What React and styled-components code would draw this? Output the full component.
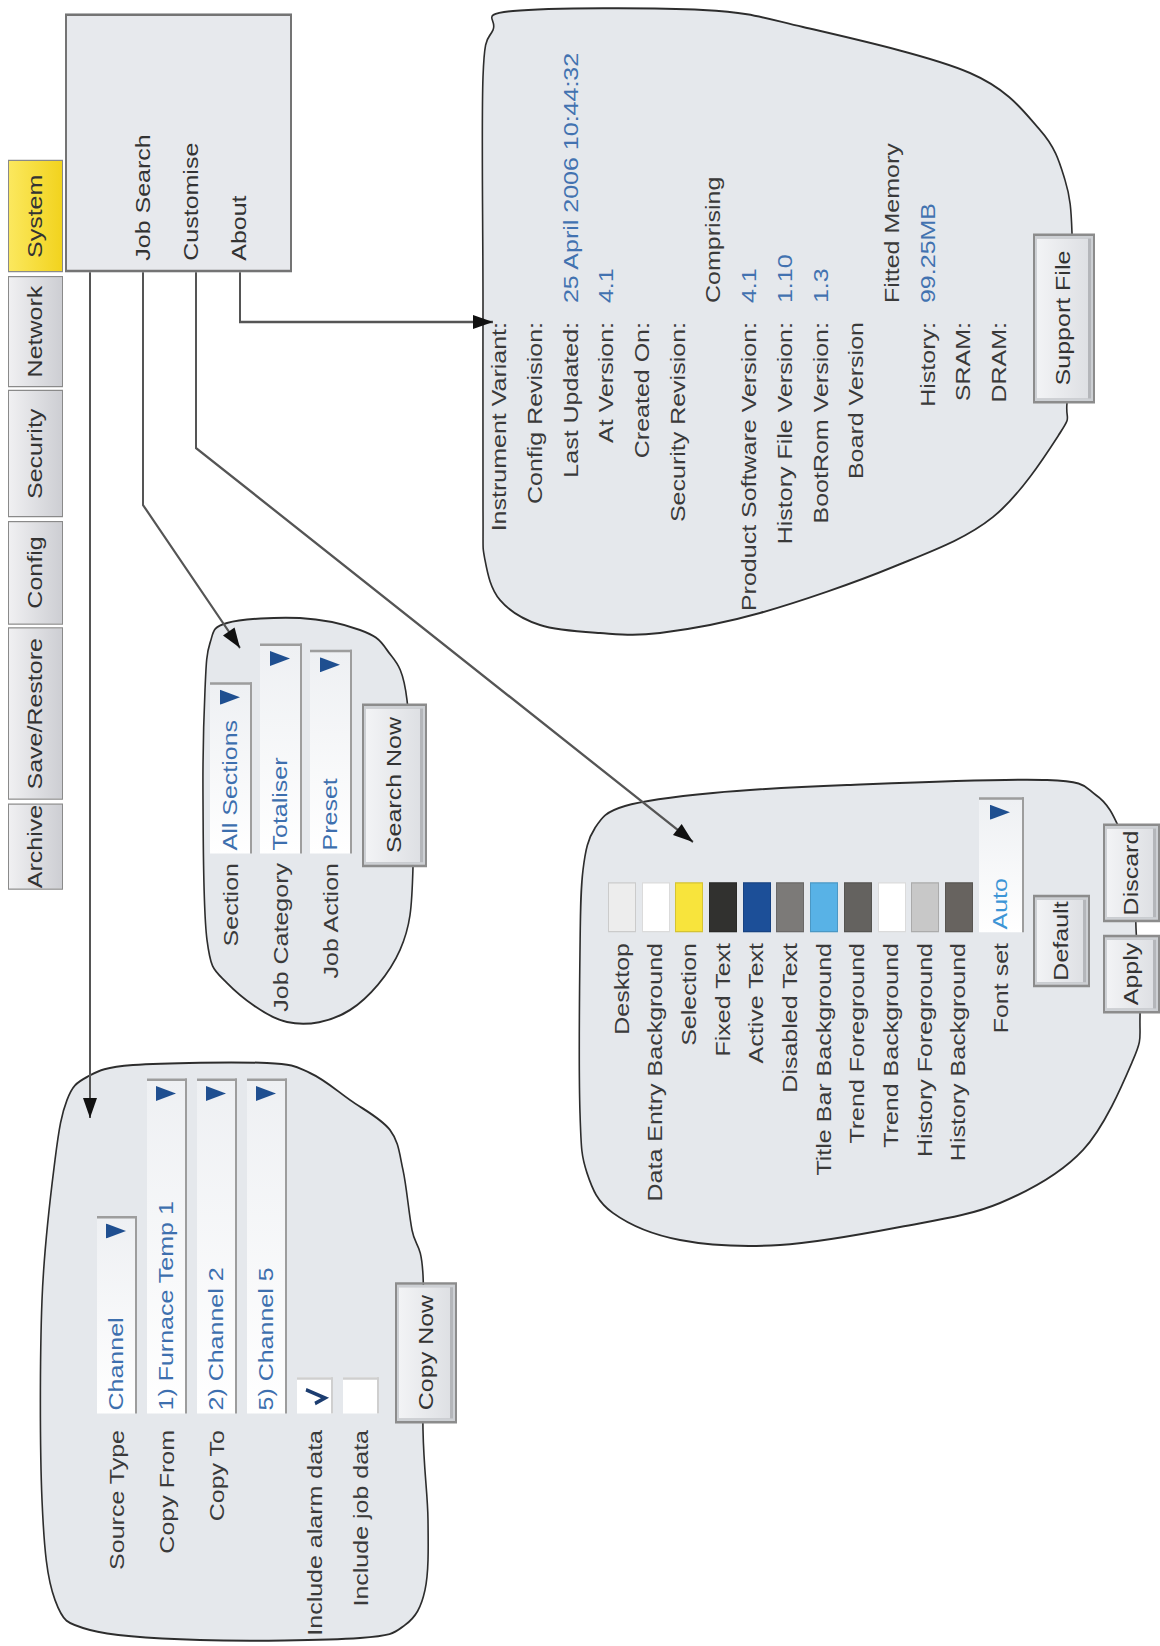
import React from 'react';
import styled, { createGlobalStyle } from 'styled-components';

// the screenshot is a landscape page turned on its side and stretched along the text direction
const SX = 1.25;
const W = 1646 / SX;
const H = 1160;

// points measured on the screenshot (x across, y down) -> canvas coords
const toCanvas = ([x, y]) => [(1646 - y) / SX, x];
const pts = (list) => list.map(toCanvas).map((p) => p.join(',')).join(' ');

const smoothPath = (raw) => {
  const p = raw.map(toCanvas);
  const n = p.length;
  let d = `M${p[0][0]},${p[0][1]}`;
  for (let i = 0; i < n; i++) {
    const p0 = p[(i - 1 + n) % n];
    const p1 = p[i];
    const p2 = p[(i + 1) % n];
    const p3 = p[(i + 2) % n];
    const c1 = [p1[0] + (p2[0] - p0[0]) / 6, p1[1] + (p2[1] - p0[1]) / 6];
    const c2 = [p2[0] - (p3[0] - p1[0]) / 6, p2[1] - (p3[1] - p1[1]) / 6];
    d += ` C${c1[0]},${c1[1]} ${c2[0]},${c2[1]} ${p2[0]},${p2[1]}`;
  }
  return d + 'Z';
};

const arrowHead = (a, b, len = 20, half = 7) => {
  const dx = b[0] - a[0];
  const dy = b[1] - a[1];
  const l = Math.hypot(dx, dy);
  const ux = dx / l;
  const uy = dy / l;
  const bx = b[0] - ux * len;
  const by = b[1] - uy * len;
  return pts([b, [bx - uy * half, by + ux * half], [bx + uy * half, by - ux * half]]);
};

const blobs = [
  // copy
  [[55, 1160], [67, 1100], [87, 1077], [133, 1065], [267, 1063], [310, 1073], [350, 1100], [390, 1130], [403, 1170], [412, 1230], [423, 1275], [423, 1430], [428, 1520], [425, 1590], [405, 1625], [360, 1638], [200, 1640], [90, 1630], [55, 1600], [42, 1500], [42, 1300]],
  // job search
  [[210, 643], [227, 623], [300, 618], [360, 630], [387, 650], [407, 700], [413, 867], [400, 950], [350, 1010], [287, 1022], [227, 983], [207, 940], [203, 800], [205, 690]],
  // customise
  [[583, 870], [595, 828], [625, 806], [713, 793], [847, 785], [1047, 780], [1096, 795], [1120, 830], [1134, 880], [1136, 928], [1140, 1017], [1133, 1060], [1083, 1150], [1000, 1203], [900, 1227], [780, 1245], [680, 1240], [613, 1213], [587, 1173], [580, 1113], [580, 950]],
  // about
  [[483, 77], [493, 30], [513, 11], [703, 10], [803, 27], [970, 73], [1040, 130], [1065, 180], [1072, 233], [1070, 320], [1067, 403], [1060, 433], [993, 517], [893, 567], [760, 613], [660, 633], [600, 633], [540, 625], [500, 600], [485, 560], [483, 510], [483, 300]],
];

const connectors = [
  [[90, 272], [90, 1118]],
  [[143, 272], [143, 505], [240, 648]],
  [[196, 272], [196, 448], [693, 842]],
  [[240, 272], [240, 322], [493, 322]],
];

const tabs = [
  { label: 'Archive', w: 69.6 },
  { label: 'Save/Restore', w: 137.6 },
  { label: 'Config', w: 83.2 },
  { label: 'Security', w: 101.6 },
  { label: 'Network', w: 88.8 },
  { label: 'System', w: 90.4, active: true },
];

const swatches = [
  ['Desktop', '#ededed'],
  ['Data Entry Background', '#ffffff'],
  ['Selection', '#f8e43c'],
  ['Fixed Text', '#31312f'],
  ['Active Text', '#1c4f98'],
  ['Disabled Text', '#7c7a78'],
  ['Title Bar Background', '#58b2e6'],
  ['Trend Foreground', '#64625f'],
  ['Trend Background', '#ffffff'],
  ['History Foreground', '#c8c8c8'],
  ['History Background', '#67635f'],
];

const about = [
  ['Instrument Variant:', ''],
  ['Config Revision:', ''],
  ['Last Updated:', '25 April 2006 10:44:32', true],
  ['At Version:', '4.1', true],
  ['Created On:', ''],
  ['Security Revision:', ''],
  ['', 'Comprising'],
  ['Product Software Version:', '4.1', true],
  ['History File Version:', '1.10', true],
  ['BootRom Version:', '1.3', true],
  ['Board Version', ''],
  ['', 'Fitted Memory'],
  ['History:', '99.25MB', true],
  ['SRAM:', ''],
  ['DRAM:', ''],
];

const GlobalStyle = createGlobalStyle`
  html, body {
    margin: 0;
    padding: 0;
    background: #fff;
  }
  body {
    font-family: "Liberation Sans", Arial, sans-serif;
  }
`;

const Page = styled.div`
  position: relative;
  width: 1160px;
  height: 1646px;
  overflow: hidden;
  background: #fff;
`;

const Canvas = styled.div`
  position: absolute;
  top: 0;
  left: 0;
  width: ${W}px;
  height: ${H}px;
  transform-origin: 0 0;
  transform: translateY(1646px) rotate(-90deg) scaleX(${SX});
  font-family: "Liberation Sans", Arial, sans-serif;
  font-size: 20px;
  color: #3a3a3a;
`;

const Drawing = styled.svg`
  position: absolute;
  inset: 0;
  width: 100%;
  height: 100%;
`;

const Node = styled.div`
  position: absolute;
  left: ${(p) => p.$x}px;
  top: ${(p) => p.$y}px;
  display: flex;
  flex-direction: column;
  align-items: flex-start;
`;

const TabStrip = styled.div`
  display: flex;
  gap: 2.6px;
  height: 55px;
`;

const Tab = styled.div`
  width: ${(p) => p.$w}px;
  box-sizing: border-box;
  display: flex;
  align-items: center;
  justify-content: center;
  border: 1.5px solid #8a8a8a;
  background: ${(p) =>
    p.$active
      ? 'linear-gradient(#fbe85e, #f2d31e)'
      : 'linear-gradient(#f0f0f2, #cdced3)'};
  color: #333;
  font-size: 20px;
  white-space: nowrap;
`;

const MenuBox = styled.div`
  width: 207.2px;
  height: 227px;
  box-sizing: border-box;
  border: 2.5px solid #747474;
  background: #e7e9ed;
  padding: 52px 0 0 7px;
  display: flex;
  flex-direction: column;
`;

const MenuItem = styled.div`
  line-height: 48px;
  color: #333;
`;

const FormGrid = styled.div`
  display: grid;
  grid-template-columns: ${(p) => p.$label}px auto;
  grid-template-rows: ${(p) => p.$rows};
  column-gap: ${(p) => p.$gap}px;
  row-gap: ${(p) => p.$rowGap}px;
  align-items: center;
`;

const Label = styled.div`
  text-align: right;
  white-space: nowrap;
  color: #3a3a3a;
`;

const Value = styled.div`
  white-space: nowrap;
  color: ${(p) => (p.$blue ? '#4272b0' : '#3a3a3a')};
`;

const Field = styled.div`
  width: ${(p) => p.$w}px;
  height: ${(p) => p.$h || 40}px;
  box-sizing: border-box;
  display: flex;
  align-items: center;
  justify-content: space-between;
  padding: 0 4px 0 2px;
  background: linear-gradient(90deg, #ffffff, #eef0f3);
  border-right: 2px solid #9d9d9d;
  border-bottom: 2px solid #9d9d9d;
  color: ${(p) => p.$color || '#3d6fae'};
  white-space: nowrap;
`;

const CheckBox = styled.div`
  width: 28.8px;
  height: 36px;
  box-sizing: border-box;
  background: #fff;
  border-right: 2px solid #cfcfcf;
  border-bottom: 2px solid #cfcfcf;
`;

const Swatch = styled.div`
  width: 40px;
  height: 28px;
  box-sizing: border-box;
  background: ${(p) => p.$c};
  border: 1px solid rgba(0, 0, 0, 0.14);
`;

const Button = styled.div`
  width: ${(p) => p.$w}px;
  height: ${(p) => p.$h}px;
  margin: ${(p) => p.$m || 0};
  box-sizing: border-box;
  display: flex;
  align-items: center;
  justify-content: center;
  border: 2px solid #8c8c8c;
  box-shadow: inset 0 0 0 2px #cdd0d4, inset 0 -3px 0 2px #b4b6ba;
  background: linear-gradient(#f3f4f6, #dcdee2);
  color: #333;
  white-space: nowrap;
`;

const ButtonRow = styled.div`
  display: flex;
  gap: ${(p) => p.$gap}px;
  margin: ${(p) => p.$m || 0};
`;

const Caret = () => (
  <svg width="12" height="20" viewBox="0 0 12 20">
    <polygon points="0,0 12,0 6,20" fill="#1f4f90" />
  </svg>
);

const Tick = () => (
  <svg width="28.8" height="36" viewBox="0 0 28.8 36">
    <path d="M8 18 L12.5 28 L19 9" fill="none" stroke="#1c3d70" strokeWidth="3" />
  </svg>
);

const Select = ({ w, h, children, color }) => (
  <Field $w={w} $h={h} $color={color}>
    <span>{children}</span>
    <Caret />
  </Field>
);

export default function App() {
  return (
    <>
      <GlobalStyle />
      <Page>
        <Canvas>
          <Drawing viewBox={`0 0 ${W} ${H}`}>
            {blobs.map((b, i) => (
              <path key={i} d={smoothPath(b)} fill="#e5e8ec" stroke="#2d2d2d" strokeWidth="1.6" />
            ))}
            {connectors.map((c, i) => (
              <g key={i}>
                <polyline points={pts(c)} fill="none" stroke="#555" strokeWidth="2" />
                <polygon points={arrowHead(c[c.length - 2], c[c.length - 1])} fill="#111" />
              </g>
            ))}
          </Drawing>

          <Node $x={604.8} $y={8}>
            <TabStrip>
              {tabs.map((t) => (
                <Tab key={t.label} $w={t.w} $active={t.active}>
                  {t.label}
                </Tab>
              ))}
            </TabStrip>
          </Node>

          <Node $x={1099.2} $y={65}>
            <MenuBox>
              <MenuItem>Job Search</MenuItem>
              <MenuItem>Customise</MenuItem>
              <MenuItem>About</MenuItem>
            </MenuBox>
          </Node>

          {/* copy */}
          <Node $x={0} $y={97}>
            <FormGrid $label={172.8} $gap={13.6} $rowGap={10} $rows="40px 40px 40px 40px 36px 36px">
              <Label>Source Type</Label>
              <Select w={157.6}>Channel</Select>
              <Label>Copy From</Label>
              <Select w={268}>1) Furnace Temp 1</Select>
              <Label>Copy To</Label>
              <Select w={268}>2) Channel 2</Select>
              <Label />
              <Select w={268}>5) Channel 5</Select>
              <Label>Include alarm data</Label>
              <CheckBox>
                <Tick />
              </CheckBox>
              <Label>Include job data</Label>
              <CheckBox />
            </FormGrid>
            <Button $w={112.8} $h={62} $m="16px 0 0 178.4px">Copy Now</Button>
          </Node>

          {/* job search */}
          <Node $x={500} $y={210}>
            <FormGrid $label={126.4} $gap={8} $rowGap={8} $rows="42px 42px 42px">
              <Label>Section</Label>
              <Select w={136.8} h={42}>All Sections</Select>
              <Label>Job Category</Label>
              <Select w={168} h={42}>Totaliser</Select>
              <Label>Job Action</Label>
              <Select w={162.4} h={42}>Preset</Select>
            </FormGrid>
            <Button $w={131.2} $h={65} $m="10px 0 0 123.2px">Search Now</Button>
          </Node>

          {/* customise */}
          <Node $x={340} $y={608}>
            <FormGrid $label={222.4} $gap={8.8} $rowGap={5.7} $rows="repeat(11, 28px) 45px">
              {swatches.map(([name, c]) => (
                <React.Fragment key={name}>
                  <Label>{name}</Label>
                  <Swatch $c={c} />
                </React.Fragment>
              ))}
              <Label>Font set</Label>
              <Select w={108} h={45} color="#3d95d6">Auto</Select>
            </FormGrid>
            <Button $w={73.6} $h={57} $m="9.3px 0 0 187.2px">Default</Button>
            <ButtonRow $gap={10.4} $m="13px 0 0 166.4px">
              <Button $w={62.4} $h={57}>Apply</Button>
              <Button $w={78.4} $h={57}>Discard</Button>
            </ButtonRow>
          </Node>

          {/* about */}
          <Node $x={820} $y={482}>
            <FormGrid $label={239.2} $gap={15.2} $rowGap={0} $rows="repeat(15, 35.7px)">
              {about.map(([l, v, blue], i) => (
                <React.Fragment key={i}>
                  <Label>{l}</Label>
                  <Value $blue={blue}>{v}</Value>
                </React.Fragment>
              ))}
            </FormGrid>
            <Button $w={136} $h={62} $m="15.5px 0 0 174.4px">Support File</Button>
          </Node>
        </Canvas>
      </Page>
    </>
  );
}
